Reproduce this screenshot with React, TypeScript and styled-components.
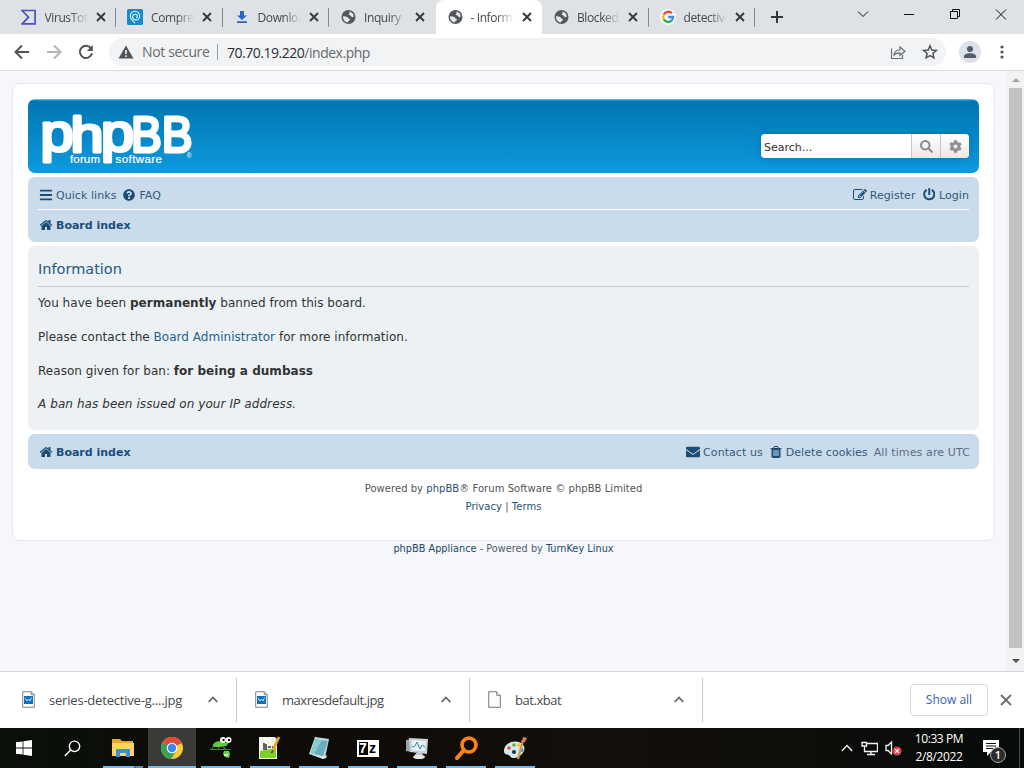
import React from "react";
import styled, {createGlobalStyle} from "styled-components";
import {FaBars, FaCog, FaEnvelope, FaPowerOff, FaQuestionCircle, FaSearch} from "react-icons/fa";

const HOME_PATH =
  "M1472 992v480q0 26-19 45t-45 19h-384v-384h-256v384h-384q-26 0-45-19t-19-45v-480q0-1 .5-3t.5-3l575-474 575 474q1 2 1 6zm223-69l-62 74q-8 9-21 11h-3q-13 0-21-7l-692-577-692 577q-12 8-24 7-13-2-21-11l-62-74q-8-10-7-23.5t11-21.5l719-599q32-26 76-26t76 26l244 204v-195q0-14 9-23t23-9h192q14 0 23 9t9 23v408l219 182q10 8 11 21.5t-7 23.5z";
const EDIT_PATH =
  "M888 1184l116-116-152-152-116 116v56h96v96h56zm440-720q-16-16-33 1l-350 350q-17 17-1 33t33-1l350-350q17-17 1-33zm80 594v190q0 119-84.5 203.5t-203.5 84.5h-832q-119 0-203.5-84.5t-84.5-203.5v-832q0-119 84.5-203.5t203.5-84.5h832q63 0 117 25 15 7 18 23 3 17-9 29l-49 49q-14 14-32 8-23-6-45-6h-832q-66 0-113 47t-47 113v832q0 66 47 113t113 47h832q66 0 113-47t47-113v-126q0-13 9-22l64-64q15-15 35-7t20 29zm-96-738l288 288-672 672h-288v-288zm444 132l-92 92-288-288 92-92q28-28 68-28t68 28l152 152q28 28 28 68t-28 68z";
const TRASH_PATH =
  "M704 1376v-704q0-14-9-23t-23-9h-64q-14 0-23 9t-9 23v704q0 14 9 23t23 9h64q14 0 23-9t9-23zm256 0v-704q0-14-9-23t-23-9h-64q-14 0-23 9t-9 23v704q0 14 9 23t23 9h64q14 0 23-9t9-23zm256 0v-704q0-14-9-23t-23-9h-64q-14 0-23 9t-9 23v704q0 14 9 23t23 9h64q14 0 23-9t9-23zm-544-992h448l-48-117q-7-9-17-11h-317q-10 2-17 11zm928 32v64q0 14-9 23t-23 9h-96v948q0 83-47 143.5t-113 60.5h-832q-66 0-113-58.5t-47-141.5v-952h-96q-14 0-23-9t-9-23v-64q0-14 9-23t23-9h309l70-167q15-37 54-63t79-26h320q40 0 79 26t54 63l70 167h309q14 0 23 9t9 23z";

function ForumIcon({path, size = 14}: {path: string; size?: number}) {
  return (
    <svg width={size} height={size} viewBox="0 0 1792 1792" fill="currentColor">
      <path d={path} />
    </svg>
  );
}

function GlobeIcon() {
  return (
    <svg width="16" height="16" viewBox="0 0 16 16">
      <circle cx="8.500" cy="8" r="7" fill="#54585d" />
      <path d="M9 2.600c2.400.2 4.500 2 4.800 4.600-.7 1.200-1.600 1.100-2.300.6-.5-.5-.4-1.200-1.300-1.300-1-.1-1.600-.3-1.500-1.200.1-.8 1-.7 1-1.400 0-.6-.5-.8-.7-1.300z" fill="#e4e6ea" />
      <path d="M3 7.300c1.300-.2 3 0 4.200.7.900.6 1 1.500 1.900 1.700.9.300 1.100 1 .5 1.700-.6.600-1.400.6-1.500 1.300 0 .4 0 .7-.2.900C4.800 13.200 2.800 10.400 3 7.300z" fill="#e4e6ea" />
    </svg>
  );
}

function VirusTotalIcon() {
  return (
    <svg width="16" height="16" viewBox="0 0 16 16" fill="none" stroke="#4a4fc4" strokeWidth="1.700">
      <path d="M1.100 1.500h13v13.300h-13L7.500 8.200z" />
    </svg>
  );
}

function CompressIcon() {
  return (
    <svg width="16" height="16" viewBox="0 0 16 16" fill="none">
      <rect width="16" height="16" rx="1.500" fill="#128bd2" />
      <path d="M8 14.200C5.500 11.800 3.300 9.700 3.300 7a4.700 4.700 0 1 1 9.400 0c0 2.200-1.700 3.900-3.800 3.900-1.900 0-3.200-1.400-3.200-3.200A2.500 2.500 0 0 1 8.200 5.200c1.300 0 2.200.9 2.200 2 0 .8-.6 1.400-1.400 1.400" stroke="#e6f5ff" strokeWidth="1.100" />
    </svg>
  );
}

function DownloadIcon() {
  return (
    <svg width="16" height="16" viewBox="0 0 16 16" fill="#2468c8">
      <path d="M6 2h4v4.500h3L8 11 3 6.500h3zM3 12.200h10v1.800H3z" />
    </svg>
  );
}

function GoogleIcon() {
  return (
    <svg width="16" height="16" viewBox="0 0 16 16" fill="none">
      <circle cx="8" cy="8" r="8" fill="#f8f9fa" />
      <g strokeWidth="2.300">
        <path d="M11.900 4.300A5 5 0 0 0 3.700 5.600" stroke="#ea4335" />
        <path d="M3.700 5.600a5 5 0 0 0 0 4.800" stroke="#fbbc05" />
        <path d="M3.700 10.400a5 5 0 0 0 7.800 1.200" stroke="#34a853" />
        <path d="M11.500 11.600A5 5 0 0 0 13 8H8.200" stroke="#4285f4" />
      </g>
    </svg>
  );
}

function CloseIcon() {
  return (
    <svg width="10" height="10" viewBox="0 0 10 10" stroke="#36393d" strokeWidth="1.900">
      <path d="M1 1l8 8M9 1L1 9" />
    </svg>
  );
}

function PictureFileIcon() {
  return (
    <svg width="13" height="17" viewBox="0 0 13 17" fill="none">
      <path d="M.7.700h8.600l3 3v12.600H.7z" fill="#fafbfc" stroke="#83878b" />
      <path d="M9.300.700v3h3" stroke="#83878b" />
      <path d="M2 5h9v8H2z" fill="#126fb9" />
      <path d="M3 7l2 3 1.500-2L8 10l1.500-3.500" stroke="#bde5ff" />
    </svg>
  );
}

function BlankFileIcon() {
  return (
    <svg width="13" height="17" viewBox="0 0 13 17" fill="#fcfcfc" stroke="#77797c">
      <path d="M.7.700h8l3.600 3.600v12H.7z" />
      <path d="M8.700.700v3.600h3.600" />
    </svg>
  );
}

const tabs = [
  {title: "VirusTotal", icon: <VirusTotalIcon />},
  {title: "Compress", icon: <CompressIcon />},
  {title: "Download", icon: <DownloadIcon />},
  {title: "Inquiry", icon: <GlobeIcon />},
  {title: "- Information", icon: <GlobeIcon />, active: true},
  {title: "Blocked", icon: <GlobeIcon />},
  {title: "detective", icon: <GoogleIcon />},
];

const downloads = [
  {name: "series-detective-g....jpg", icon: <PictureFileIcon />, tracking: -0.2},
  {name: "maxresdefault.jpg", icon: <PictureFileIcon />, tracking: -0.45},
  {name: "bat.xbat", icon: <BlankFileIcon />, tracking: -0.45},
];

function BrowserTabs() {
  return (
    <TabStrip>
      {tabs.map((tab, i) => (
        <Tab key={tab.title} $active={tab.active} $divider={!tab.active && i !== 3}>
          {tab.icon}
          <TabTitle>{tab.title}</TabTitle>
          <CloseIcon />
        </Tab>
      ))}
      <NewTab>
        <svg width="12" height="12" viewBox="0 0 12 12" stroke="#33363a" strokeWidth="2">
          <path d="M6 0v12M0 6h12" />
        </svg>
      </NewTab>
      <WindowButtons>
        <svg width="46" height="28" viewBox="0 0 46 28">
          <path d="M18 11.500l5 5 5-5" />
        </svg>
        <svg width="46" height="28" viewBox="0 0 46 28">
          <path d="M18 14.500h10" />
        </svg>
        <svg width="46" height="28" viewBox="0 0 46 28">
          <path d="M18.500 11.500h7v7h-7zM20.500 11V9.500h7v7H26" />
        </svg>
        <svg width="46" height="28" viewBox="0 0 46 28">
          <path d="M18 9.500l10 10M28 9.500l-10 10" />
        </svg>
      </WindowButtons>
    </TabStrip>
  );
}

function AddressBar() {
  return (
    <Toolbar>
      <NavButtons>
        <svg width="16" height="16" viewBox="0 0 16 16">
          <path d="M15 8H2M8 1.500L1.500 8 8 14.500" stroke="#505458" />
        </svg>
        <svg width="16" height="16" viewBox="0 0 16 16">
          <path d="M1 8h13M8 1.500L14.500 8 8 14.500" stroke="#b4b7ba" />
        </svg>
        <svg width="16" height="16" viewBox="0 0 16 16">
          <path d="M13.200 4.600A6.100 6.100 0 1 0 14 9.200" stroke="#505458" />
          <path d="M14.800 1v6H8.800z" fill="#505458" />
        </svg>
      </NavButtons>
      <Omnibox>
        <svg width="16" height="14" viewBox="0 0 16 14">
          <path d="M8 .5L15.500 13.500H.5z" fill="#505458" />
          <path d="M8 5v4M8 10.300v1.700" stroke="#f1f3f4" strokeWidth="1.600" />
        </svg>
        <SecurityLabel>Not secure</SecurityLabel>
        <Url>
          70.70.19.220<span>/index.php</span>
        </Url>
        <svg width="16" height="16" viewBox="0 0 16 16" fill="none" stroke="#6a6e72" strokeWidth="1.200">
          <path d="M1.500 4.500v10h11V11M4 11c.3-3.500 2.500-5 6-5V3l5 4.200-5 4.200V8.800C7.500 8.700 5.500 9.500 4 11z" />
        </svg>
        <svg width="16" height="16" viewBox="0 0 16 16" fill="none" stroke="#505458" strokeWidth="1.500">
          <path d="M8 1.800l1.800 4.200 4.500.4-3.400 3 1 4.400L8 11.500l-3.900 2.300 1-4.400-3.400-3 4.500-.4z" />
        </svg>
      </Omnibox>
      <Profile>
        <svg width="14" height="14" viewBox="0 0 14 14" fill="#505d6d">
          <circle cx="7" cy="4" r="3" />
          <path d="M1 13v-1.500C1 9.200 4 8.300 7 8.300s6 .9 6 3.200V13z" />
        </svg>
      </Profile>
      <svg width="4" height="16" viewBox="0 0 4 16" fill="#505458">
        <circle cx="2" cy="3" r="1.600" />
        <circle cx="2" cy="8" r="1.600" />
        <circle cx="2" cy="13" r="1.600" />
      </svg>
    </Toolbar>
  );
}

function Logo() {
  return (
    <svg width="160" height="60" viewBox="0 0 160 60" fill="#fff" fontFamily="'Liberation Sans', Arial, sans-serif">
      <g stroke="#fff" strokeWidth="3.200" strokeLinejoin="round">
        <text x="2.500" y="45" fontSize="51" textLength="33" lengthAdjust="spacingAndGlyphs">p</text>
        <text x="32.500" y="45.500" fontSize="50" textLength="33" lengthAdjust="spacingAndGlyphs">h</text>
        <text x="63" y="45" fontSize="51" textLength="33" lengthAdjust="spacingAndGlyphs">p</text>
        <text x="93" y="45.500" fontSize="50" textLength="61.500" lengthAdjust="spacingAndGlyphs">BB</text>
      </g>
      <g fontSize="11.500" stroke="#fff" strokeWidth=".2">
        <text x="32" y="56.500" textLength="30">forum</text>
        <text x="77.500" y="56.500" textLength="46.500">software</text>
      </g>
      <text x="148.500" y="52" fontSize="7">®</text>
    </svg>
  );
}

function ForumPage() {
  return (
    <Page>
      <Wrap>
        <Headerbar>
          <Logo />
          <SearchBox>
            <SearchInput>Search...</SearchInput>
            <SearchButton>
              <FaSearch size={13} />
            </SearchButton>
            <SearchButton>
              <FaCog size={13} />
            </SearchButton>
          </SearchBox>
        </Headerbar>
        <Navbar>
          <NavRow $divided>
            <NavLink>
              <FaBars size={14} />
              <span>Quick links</span>
            </NavLink>
            <NavLink $gap={4}>
              <FaQuestionCircle size={12} />
              <span>FAQ</span>
            </NavLink>
            <Spacer />
            <NavLink>
              <ForumIcon path={EDIT_PATH} />
              <span>Register</span>
            </NavLink>
            <NavLink $gap={4}>
              <FaPowerOff size={12.500} />
              <span>Login</span>
            </NavLink>
          </NavRow>
          <NavRow>
            <NavLink $bold>
              <ForumIcon path={HOME_PATH} />
              <span>Board index</span>
            </NavLink>
          </NavRow>
        </Navbar>
        <Panel>
          <PanelTitle>Information</PanelTitle>
          <Message>
            You have been <strong>permanently</strong> banned from this board.
          </Message>
          <Message>
            Please contact the <a>Board Administrator</a> for more information.
          </Message>
          <Message>
            Reason given for ban: <strong>for being a dumbass</strong>
          </Message>
          <Message>
            <em>A ban has been issued on your IP address.</em>
          </Message>
        </Panel>
        <FooterNav>
          <NavLink $bold>
            <ForumIcon path={HOME_PATH} />
            <span>Board index</span>
          </NavLink>
          <Spacer />
          <NavLink>
            <FaEnvelope size={14} />
            <span>Contact us</span>
          </NavLink>
          <NavLink>
            <ForumIcon path={TRASH_PATH} />
            <span>Delete cookies</span>
          </NavLink>
          <Timezone>All times are UTC</Timezone>
        </FooterNav>
        <Copyright>
          <p>
            Powered by <a>phpBB</a>® Forum Software © phpBB Limited
          </p>
          <p>
            <a>Privacy</a> | <a>Terms</a>
          </p>
        </Copyright>
      </Wrap>
      <Appliance>
        <a>phpBB Appliance</a> - Powered by <a>TurnKey Linux</a>
      </Appliance>
    </Page>
  );
}

function DownloadShelf() {
  return (
    <Shelf>
      {downloads.map((item) => (
        <DownloadItem key={item.name}>
          {item.icon}
          <FileName $tracking={item.tracking}>{item.name}</FileName>
          <svg width="10" height="7" viewBox="0 0 10 7" fill="none" stroke="#5f6368" strokeWidth="1.700">
            <path d="M.7 6L5 1.500 9.300 6" />
          </svg>
        </DownloadItem>
      ))}
      <Spacer />
      <ShowAll>Show all</ShowAll>
      <svg width="12" height="12" viewBox="0 0 12 12" stroke="#6c7074" strokeWidth="1.800">
        <path d="M1 1l10 10M11 1L1 11" />
      </svg>
    </Shelf>
  );
}

function Taskbar() {
  return (
    <TaskbarRow>
      <TaskButton>
        <svg width="16" height="16" viewBox="0 0 16 16" fill="#fff">
          <path d="M0 2.300L6.600 1.400v6.200H0zM7.400 1.300L16 0v7.600H7.400zM0 8.400h6.600v6.200L0 13.700zM7.400 8.400H16V16l-8.600-1.300z" />
        </svg>
      </TaskButton>
      <TaskButton>
        <svg width="17" height="17" viewBox="0 0 17 17" fill="none" stroke="#fff" strokeWidth="1.400">
          <circle cx="10.500" cy="6.300" r="5.200" />
          <path d="M6.700 10L.8 16" />
        </svg>
      </TaskButton>
      <AppList>
        <AppButton $stacked>
          <svg width="24" height="24" viewBox="0 0 24 24">
            <path d="M1 3h8l2 2h11v15H1z" fill="#e8a72e" />
            <path d="M1 7h22v13H1z" fill="#ffd366" />
            <path d="M5 13h14v8h-4v-4H9v4H5z" fill="#3f90d0" />
          </svg>
        </AppButton>
        <AppButton $focused>
          <svg width="24" height="24" viewBox="0 0 24 24">
            <circle cx="12" cy="12" r="11" fill="#f9cb38" />
            <path d="M2.500 6.500A11 11 0 0 1 21.500 6.500L12 12z" fill="#e04a3b" />
            <path d="M21.800 7H12v5z" fill="#e04a3b" />
            <path d="M2.500 6.500A11 11 0 0 0 11 23l5.500-8.500L12 12z" fill="#37a455" />
            <circle cx="12" cy="12" r="5.300" fill="#fff" />
            <circle cx="12" cy="12" r="4.200" fill="#4285f4" />
          </svg>
        </AppButton>
        <AppButton>
          <svg width="24" height="24" viewBox="0 0 24 24" fill="none">
            <path d="M3.500 10c1-4 6-6 11-4l5 1-2 3-6 1H5z" fill="#62c83c" />
            <path d="M1 13.500h21M5 10l-2 3M10 11l-1 2.500M14 11l3 2.500" stroke="#2f8a25" strokeWidth="1.200" />
            <path d="M15 15l-1 3 2 3 4 1 1-4-1-3z" fill="#66d248" />
            <path d="M15 19h4" stroke="#fff" strokeWidth="1.300" />
            <circle cx="14" cy="4" r="3" fill="#f5f5f5" />
            <circle cx="19.500" cy="4" r="3" fill="#f5f5f5" />
            <path d="M13.500 4h2M19 4h2" stroke="#111" strokeWidth="2" />
          </svg>
        </AppButton>
        <AppButton>
          <svg width="24" height="24" viewBox="0 0 24 24" fill="none">
            <path d="M1 1h16l2 2v20H1z" fill="#f4f7e9" />
            <path d="M2 15l16-3v10H2z" fill="#80cf27" />
            <path d="M6 14V7M8 14V8M10 11h3M14 11h2" stroke="#333" strokeWidth="1.500" />
            <path d="M21 1l-6 13" stroke="#e6a321" strokeWidth="2.800" />
            <path d="M14.500 14l-1 3 2-2" stroke="#54371c" />
          </svg>
        </AppButton>
        <AppButton>
          <svg width="24" height="24" viewBox="0 0 24 24">
            <path d="M8 1l14 2-4 19-16-4z" fill="#bddce3" />
            <path d="M8 3l13 2-5 15-12-3z" fill="#69aebb" />
            <path d="M8 3l7 1-8 14-3-1z" fill="#8dc8d1" />
            <path d="M2 18l14 3 4-2-1 3-3 1z" fill="#e7eff0" />
          </svg>
        </AppButton>
        <AppButton>
          <SevenZip>
            <b>7</b>
            <span>z</span>
          </SevenZip>
        </AppButton>
        <AppButton>
          <svg width="24" height="24" viewBox="0 0 24 24" fill="none">
            <path d="M1 4l5-1v13l-5-1z" fill="#9aa4a6" />
            <path d="M4 2l19 1-1 15-17-2z" fill="#cbd3d5" />
            <path d="M7 4l14 1-1 10-13-1z" fill="#e9f2f5" />
            <path d="M7 11l3-1 2-4 3 7 2-4 3 2" stroke="#4284a4" />
            <path d="M11 17h6l2 4H9z" fill="#c1c8ca" />
            <ellipse cx="14" cy="21" rx="6" ry="2" fill="#e4e8e9" />
          </svg>
        </AppButton>
        <AppButton>
          <svg width="24" height="24" viewBox="0 0 24 24" fill="none" stroke="#ff8313">
            <circle cx="15" cy="9" r="7" strokeWidth="3.600" />
            <path d="M9.500 14.500L3 22" strokeWidth="4" strokeLinecap="round" />
          </svg>
        </AppButton>
        <AppButton>
          <svg width="24" height="24" viewBox="0 0 24 24" fill="none">
            <path d="M1 15C1 8 9 4 16 6c6 2 7 8 3 12-4 5-11 5-12 2-1-2-6 0-6-5z" fill="#d5e8ef" />
            <circle cx="6" cy="12" r="1.800" fill="#db5540" />
            <circle cx="11" cy="9" r="1.800" fill="#66ae3c" />
            <circle cx="16" cy="9" r="1.800" fill="#eec13b" />
            <circle cx="11" cy="16" r="2" fill="#202f3a" />
            <circle cx="18.500" cy="14" r="2" fill="#3c91cb" />
            <path d="M20 4l-5 19" stroke="#d99650" strokeWidth="2.300" />
            <path d="M19 6l1-5 4 1-2 4z" fill="#dd805a" />
          </svg>
        </AppButton>
      </AppList>
      <Spacer />
      <Tray>
        <svg width="12" height="8" viewBox="0 0 12 8">
          <path d="M.8 7L6 1.500 11.200 7" />
        </svg>
        <svg width="17" height="16" viewBox="0 0 17 16">
          <path d="M5.500 3.500h11v8h-13V6M1 2.500h4.500v3.500H1zM10 12v2.500M6 14.500h8" />
        </svg>
        <svg width="17" height="16" viewBox="0 0 17 16">
          <path d="M1 5.500h2L6.500 2v12L3 10.500H1z" />
          <circle cx="12" cy="11" r="4.600" fill="#d73d49" stroke="none" />
          <path d="M10 9l4 4M14 9l-4 4" />
        </svg>
      </Tray>
      <Clock>
        <span>10:33 PM</span>
        <span>2/8/2022</span>
      </Clock>
      <Notifications>
        <svg width="17" height="17" viewBox="0 0 17 17" fill="#fff">
          <path d="M0 0h16v12H8l-4 4v-4H0z" />
          <path d="M3 3.500h10M3 6h10M3 8.500h7" stroke="#111" />
        </svg>
        <Badge>1</Badge>
      </Notifications>
    </TaskbarRow>
  );
}

function App() {
  return (
    <>
      <GlobalStyle />
      <Screen>
        <BrowserTabs />
        <AddressBar />
        <Viewport>
          <ForumPage />
          <Scrollbar>
            <ScrollArrow />
            <ScrollThumb />
            <ScrollArrow $down />
          </Scrollbar>
        </Viewport>
        <DownloadShelf />
        <Taskbar />
      </Screen>
    </>
  );
}

export default App;

const GlobalStyle = createGlobalStyle`
  * {
    box-sizing: border-box;
  }
  body {
    margin: 0;
    overflow: hidden;
  }
  p, h2 {
    margin: 0;
  }
  svg {
    flex-shrink: 0;
  }
`;

const Screen = styled.div`
  width: 1024px;
  height: 768px;
  display: flex;
  flex-direction: column;
  font-family: "Open Sans", "Noto Sans", sans-serif;
`;

const Spacer = styled.div`
  flex: 1;
`;

const TabStrip = styled.div`
  height: 34px;
  display: flex;
  padding-left: 9.500px;
  background: #dee1e6;
`;

const Tab = styled.div<{$active?: boolean; $divider?: boolean}>`
  position: relative;
  width: 106.500px;
  height: 34px;
  display: flex;
  align-items: center;
  padding: 0 10px 0 11px;
  border-radius: 8px 8px 0 0;
  background: ${({$active}) => ($active ? "#fff" : "transparent")};

  &::after {
    content: "";
    display: ${({$divider}) => ($divider ? "block" : "none")};
    position: absolute;
    right: 0;
    top: 8px;
    width: 1px;
    height: 19px;
    background: #85888d;
  }
`;

const TabTitle = styled.span`
  width: 43px;
  margin: 0 8px 0 8px;
  overflow: hidden;
  white-space: nowrap;
  font-size: 12px;
  letter-spacing: -0.4px;
  color: #45484c;
  mask-image: linear-gradient(to right, #000 60%, transparent);
`;

const NewTab = styled.div`
  width: 44px;
  display: flex;
  align-items: center;
  justify-content: center;
`;

const WindowButtons = styled.div`
  display: flex;
  margin-left: auto;
  fill: none;
  stroke: #111;
`;

const Toolbar = styled.div`
  height: 37px;
  display: flex;
  align-items: center;
  padding-right: 20px;
  background: #fff;
  border-bottom: 1px solid #d9dbde;
`;

const NavButtons = styled.div`
  width: 109px;
  display: flex;
  gap: 16px;
  padding-left: 14px;
  fill: none;
  stroke-width: 2;
`;

const Omnibox = styled.div`
  width: 837px;
  height: 28px;
  display: flex;
  align-items: center;
  padding: 0 8px 0 9px;
  border-radius: 14px;
  background: #f1f3f4;
  font-size: 14px;

  svg + svg {
    margin-left: 16px;
  }
`;

const SecurityLabel = styled.span`
  width: 76px;
  margin-left: 8px;
  border-right: 1px solid #9a9da1;
  line-height: 16px;
  white-space: nowrap;
  letter-spacing: -0.35px;
  color: #6a6d71;
`;

const Url = styled.span`
  flex: 1;
  margin-left: 9px;
  letter-spacing: -0.48px;
  color: #2c2e31;

  span {
    color: #66696d;
  }
`;

const Profile = styled.div`
  width: 22px;
  height: 22px;
  display: flex;
  align-items: center;
  justify-content: center;
  margin: 0 19px 0 13px;
  border-radius: 50%;
  background: #dde1e8;
`;

const Viewport = styled.div`
  height: 600px;
  display: flex;
  background: #f5f7fa;
`;

const Page = styled.div`
  width: 1007px;
  padding: 12px 12px 0;
  font-family: Verdana, "DejaVu Sans", sans-serif;
  color: #536482;
`;

const Wrap = styled.div`
  width: 983px;
  height: 458px;
  padding: 15px 15px;
  border: 1px solid #e6e9ed;
  border-radius: 8px;
  background: #fff;
`;

const Headerbar = styled.div`
  height: 74px;
  display: flex;
  justify-content: space-between;
  align-items: center;
  margin-bottom: 4px;
  padding: 0 10px;
  border-radius: 7px;
  background: linear-gradient(to bottom, #6aceff 0%, #0076b1 2px, #12a3eb 92px);
`;

const SearchBox = styled.div`
  height: 24px;
  display: flex;
  margin-top: 20px;
  border-radius: 4px;
  overflow: hidden;
  background: #fff;
  box-shadow: 0 0 10px #0075b0;
`;

const SearchInput = styled.div`
  width: 150px;
  padding-left: 3px;
  line-height: 27px;
  font-size: 11px;
  color: #333;
`;

const SearchButton = styled.div`
  width: 29px;
  display: flex;
  align-items: center;
  justify-content: center;
  border-left: 1px solid #c7c3bf;
  background: linear-gradient(to bottom, #fff, #e9e9e9);
  color: #8f8f8f;
`;

const Navbar = styled.div`
  height: 65px;
  margin-bottom: 4px;
  padding: 3px 10px;
  border-radius: 7px;
  background: #cadceb;
`;

const NavRow = styled.div<{$divided?: boolean}>`
  height: 30px;
  display: flex;
  align-items: center;
  gap: 7px;
  padding-left: 1px;
  border-bottom: 1px solid ${({$divided}) => ($divided ? "#fff" : "transparent")};
`;

const NavLink = styled.a<{$bold?: boolean; $gap?: number}>`
  display: flex;
  align-items: center;
  gap: ${({$gap}) => $gap ?? 3}px;
  font-size: 11px;
  font-weight: ${({$bold}) => ($bold ? 700 : 400)};
  letter-spacing: ${({$bold}) => ($bold ? 0 : "0.06px")};
  white-space: nowrap;
  color: #1a4c76;

  span {
    padding-top: 2px;
    color: ${({$bold}) => ($bold ? "#1a4c7c" : "#34597c")};
  }
`;

const Panel = styled.div`
  height: 184px;
  margin-bottom: 4px;
  padding: 11px 10px;
  border-radius: 7px;
  background: #ecf1f3;
`;

const PanelTitle = styled.h2`
  height: 30px;
  margin-bottom: 8px;
  border-bottom: 1px solid #c3cacf;
  font-size: 14.500px;
  font-weight: 400;
  line-height: 25px;
  color: #28578a;
`;

const Message = styled.p`
  margin-bottom: 16px;
  font-size: 12px;
  line-height: 17.800px;
  letter-spacing: 0.03px;
  color: #333;

  a {
    color: #28608f;
  }
  em {
    letter-spacing: 0.08px;
  }
`;

const FooterNav = styled.div`
  height: 35px;
  display: flex;
  align-items: center;
  gap: 6px;
  padding: 0 9px 0 11px;
  border-radius: 7px;
  background: #cadceb;
`;

const Timezone = styled.span`
  padding-top: 2px;
  font-size: 11px;
  letter-spacing: 0.12px;
  color: #5b6c84;
`;

const Copyright = styled.div`
  padding-top: 11px;
  text-align: center;
  font-size: 10px;
  line-height: 18px;
  letter-spacing: 0.04px;
  color: #555;

  a {
    color: #2a4f74;
  }
`;

const Appliance = styled.div`
  text-align: center;
  font-family: "DejaVu Sans Condensed", "DejaVu Sans", sans-serif;
  font-size: 10.800px;
  line-height: 15px;
  letter-spacing: 0.03px;
  color: #53606e;

  a {
    color: #24496c;
  }
`;

const Scrollbar = styled.div`
  width: 17px;
  display: flex;
  flex-direction: column;
  justify-content: space-between;
  align-items: center;
  padding: 7px 0 8px;
  background: #f1f2f3;
`;

const ScrollArrow = styled.i<{$down?: boolean}>`
  border: 4px solid transparent;
  border-top: ${({$down}) => ($down ? "4px solid #505050" : "0")};
  border-bottom: ${({$down}) => ($down ? "0" : "4px solid #a3a3a3")};
`;

const ScrollThumb = styled.div`
  width: 13px;
  height: 560px;
  margin-bottom: 5px;
  background: #c1c1c3;
`;

const Shelf = styled.div`
  height: 57px;
  display: flex;
  align-items: center;
  padding-right: 12px;
  border-top: 1px solid #d5d7db;
  background: #fff;
`;

const DownloadItem = styled.div`
  width: 233px;
  height: 44px;
  display: flex;
  align-items: center;
  padding: 0 18px 2px 18px;
  border-right: 1px solid #c5c8cb;

  &:first-child {
    width: 237px;
    padding-left: 22px;
  }
`;

const FileName = styled.span<{$tracking: number}>`
  flex: 1;
  margin-left: 14px;
  padding-top: 2px;
  font-size: 13px;
  letter-spacing: ${({$tracking}) => $tracking}px;
  color: #47494c;
`;

const ShowAll = styled.div`
  width: 78px;
  height: 32px;
  margin-right: 12px;
  border: 1px solid #d5d8dd;
  border-radius: 4px;
  text-align: center;
  line-height: 30px;
  font-size: 12px;
  color: #3565ad;
`;

const TaskbarRow = styled.div`
  height: 40px;
  display: flex;
  background: linear-gradient(to right, #0a100a, #0d0b08 25%, #130f0a 60%, #0d0d0a 80%, #050b09);
`;

const TaskButton = styled.div`
  width: 48px;
  display: flex;
  align-items: center;
  justify-content: center;
`;

const AppList = styled.div`
  display: flex;
  gap: 1px;
  padding-left: 3px;
`;

const AppButton = styled.div<{$focused?: boolean; $stacked?: boolean}>`
  width: 48px;
  height: 40px;
  display: flex;
  align-items: center;
  justify-content: center;
  background: ${({$focused}) => ($focused ? "#3b3a38" : "transparent")};
  position: relative;

  &::after {
    content: "";
    position: absolute;
    bottom: 0;
    left: ${({$focused}) => ($focused ? 0 : "4px")};
    right: ${({$focused}) => ($focused ? 0 : "4px")};
    height: 2px;
    background: ${({$stacked}) => ($stacked ? "linear-gradient(to right, #76b9ed 31px, #35597a 31px, #5790ba 33px)" : "#76b9ed")};
  }
`;

const SevenZip = styled.div`
  width: 22px;
  height: 17px;
  display: flex;
  align-items: center;
  justify-content: center;
  border: 2px solid #fff;
  background: linear-gradient(to right, #050505 50%, #fff 50%);
  font: 700 14px/13px "Liberation Sans", sans-serif;
  color: #fff;

  b {
    width: 9px;
  }
  span {
    width: 9px;
    text-align: center;
    color: #050505;
  }
`;

const Tray = styled.div`
  display: flex;
  align-items: center;
  gap: 7px;
  fill: none;
  stroke: #f3f3f3;
  stroke-width: 1.3;

  svg:first-child {
    margin-right: 1px;
  }
`;

const Clock = styled.div`
  width: 74px;
  display: flex;
  flex-direction: column;
  align-items: center;
  padding-top: 2px;
  font-size: 12px;
  line-height: 18px;
  letter-spacing: -0.4px;
  color: #fff;
`;

const Notifications = styled.div`
  position: relative;
  width: 44px;
  padding: 12px 0 0 7px;
  border-right: 1px solid #4b4b49;
  margin-right: 4px;
`;

const Badge = styled.span`
  position: absolute;
  left: 14px;
  top: 19px;
  width: 16px;
  height: 16px;
  border: 1px solid #a5a5a5;
  border-radius: 50%;
  background: #2c2c2c;
  text-align: center;
  font-size: 11px;
  font-weight: 600;
  line-height: 14px;
  color: #fff;
`;
